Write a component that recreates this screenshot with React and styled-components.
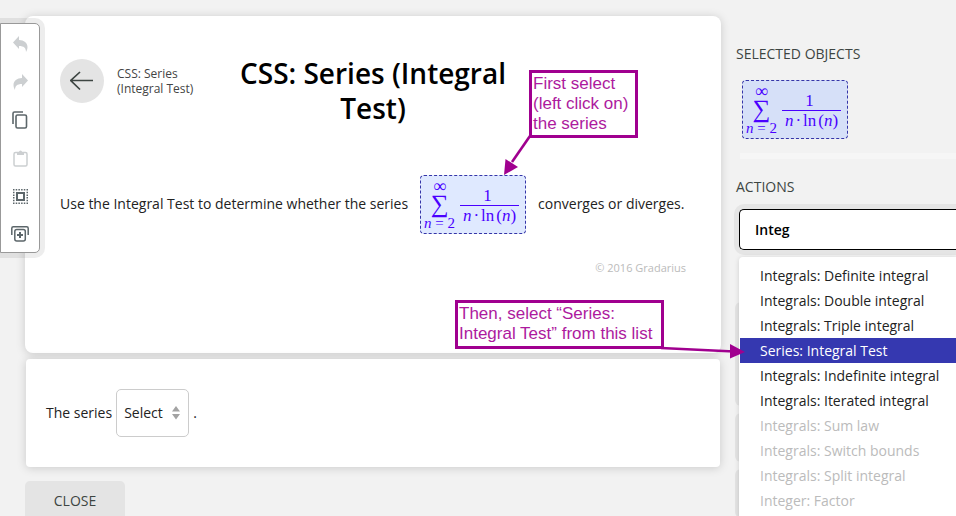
import React, { useState } from "react";
import styled, { createGlobalStyle } from "styled-components";

const Global = createGlobalStyle`
  * { box-sizing: border-box; }
  html, body { margin: 0; background: #f2f2f2; overflow: hidden; }
  body, button, input, select {
    font-family: "Open Sans", "Noto Sans", sans-serif;
    font-size: 14px;
    color: #222;
  }
`;

const Page = styled.div`
  position: relative;
  display: grid;
  grid-template-columns: minmax(0, 1fr) 220px;
  column-gap: 15px;
  min-height: 100vh;
  padding-left: 25px;
`;

const Toolbar = styled.nav`
  position: absolute;
  left: 0;
  top: 23px;
  z-index: 2;
  display: flex;
  flex-direction: column;
  width: 40px;
  background: #fff;
  border: 1px solid #999;
  border-radius: 0 5px 5px 0;
  box-shadow: 0 0 0 5px rgba(0, 0, 0, 0.07);
`;

const ToolButton = styled.button`
  display: grid;
  place-items: center;
  height: 38px;
  padding: 2px 0 0;
  border: 0;
  background: none;
  color: #5c666a;
  &:disabled { color: #cccfd1; }
`;

const Main = styled.main`
  display: flex;
  flex-direction: column;
  align-items: stretch;
  padding-top: 16px;
`;

const Card = styled.section`
  background: #fff;
  box-shadow: 0 1px 10px rgba(0, 0, 0, 0.17);
`;

const ProblemCard = styled(Card)`
  padding: 40px 35px 75px;
  border-radius: 8px;
`;

const Header = styled.header`
  display: grid;
  grid-template-columns: 44px 87px minmax(0, 1fr) 144px;
  align-items: start;
  column-gap: 13px;
`;

const BackButton = styled.button`
  display: grid;
  place-items: center;
  width: 44px;
  height: 44px;
  margin-top: 3px;
  padding: 0;
  border: 0;
  border-radius: 50%;
  background: #e4e4e4;
  color: #3d4542;
`;

const Crumb = styled.div`
  margin-top: 10px;
  font-size: 12px;
  line-height: 15px;
  color: #444;
`;

const Title = styled.h1`
  margin: 0;
  font-size: 28px;
  line-height: 35px;
  font-weight: 600;
  text-align: center;
  color: #000;
`;

const Statement = styled.p`
  display: flex;
  align-items: center;
  gap: 12px;
  margin: 49px 0 24px;
`;

const Phrase = styled.span`
  padding-bottom: 2px;
`;

const Copyright = styled.footer`
  font-size: 11px;
  line-height: 20px;
  text-align: right;
  color: #bbb;
`;

const AnswerCard = styled(Card)`
  display: flex;
  align-items: center;
  gap: 4px;
  margin: 6px 1px 14px;
  padding: 30px 20px;
  border-radius: 4px;
`;

const SelectBox = styled.span`
  display: grid;
  align-items: center;
  width: 73px;
  > * { grid-area: 1 / 1; }
  > svg { justify-self: end; margin-right: 9px; pointer-events: none; }
`;

const Select = styled.select`
  appearance: none;
  width: 100%;
  height: 48px;
  padding: 0 7px 2px;
  border: 1px solid #ccc;
  border-radius: 5px;
  background: #fff;
`;

const CloseButton = styled.button`
  align-self: flex-start;
  width: 100px;
  height: 40px;
  padding: 0 0 2px;
  border: 0;
  border-radius: 5px;
  background: #e4e4e4;
  color: #3d4542;
`;

const Formula = styled.button`
  display: flex;
  align-items: center;
  gap: 5px;
  flex: none;
  width: 106px;
  height: 59px;
  padding: 0 3px;
  border: 1px dashed #3535a8;
  border-radius: 4px;
  background: ${(p) => (p.$muted ? "#d6e0f8" : "#dfe9ff")};
  color: #4a00ff;
  font-family: "Liberation Serif", serif;
`;

const SumColumn = styled.span`
  display: flex;
  flex-direction: column;
  align-items: center;
  width: 31px;
`;

const Limit = styled.span`
  font-size: ${(p) => (p.$top ? "18px" : "15px")};
  line-height: ${(p) => (p.$top ? "14px" : "16px")};
  white-space: nowrap;
`;

const Sigma = styled.span`
  font-size: 25px;
  line-height: 22px;
`;

const Fraction = styled.span`
  display: flex;
  flex-direction: column;
  width: 59px;
  text-align: center;
  font-size: 17px;
  line-height: 20px;
  white-space: nowrap;
`;

const Numerator = styled.span`
  height: 20px;
  padding: 1px 4px 0 0;
`;

const Denominator = styled.span`
  display: flex;
  justify-content: center;
  align-items: center;
  gap: 2px;
  height: 20px;
  padding-top: 2px;
  border-top: 1px solid currentColor;
`;

const Side = styled.aside`
  padding-top: 44px;
`;

const SideHeading = styled.h2`
  margin: 0;
  font-size: 14px;
  line-height: 20px;
  font-weight: 400;
  color: #3d4542;
`;

const SelectedObject = styled.div`
  padding: 16px 6px 14px;
`;

const Divider = styled.hr`
  height: 6px;
  margin: 0 0 18px 4px;
  border: 0;
  background: #f6f6f6;
`;

const Combo = styled.div`
  position: relative;
  margin: 12px 0 52px 3px;
`;

const Search = styled.input`
  display: block;
  width: 100%;
  height: 41px;
  padding: 0 15px;
  border: 1px solid #000;
  border-right: 0;
  border-radius: 5px 0 0 5px;
  background: #fff;
  color: #000;
  font-weight: 600;
  outline: 0;
  box-shadow: 0 0 0 5px rgba(0, 0, 0, 0.05);
`;

const Options = styled.ul`
  position: absolute;
  top: 48px;
  left: 0;
  right: 0;
  margin: 0;
  padding: 6px 0 6px 1px;
  list-style: none;
  background: #fff;
  border-radius: 4px 0 0 0;
  box-shadow: 0 1px 5px rgba(0, 0, 0, 0.15);
`;

const Option = styled.li`
  padding-left: 20px;
  line-height: 25px;
  white-space: nowrap;
  color: ${(p) => (p.$active ? "#fff" : p.$disabled ? "#bbb" : "#222")};
  background: ${(p) => (p.$active ? "#3538b0" : "transparent")};
`;

const ActionTile = styled.div`
  height: ${(p) => (p.$tall ? "104px" : "49px")};
  margin: 0 0 7px -1px;
  border-radius: 6px 0 0 6px;
  background: #e4e4e4;
`;

const Callout = styled.div`
  position: absolute;
  z-index: 3;
  left: ${(p) => p.$x}px;
  top: ${(p) => p.$y}px;
  padding: 1px;
  border: 3px solid #a0008f;
  background: #fff;
  color: #ad1a9e;
  font-family: "Liberation Sans", sans-serif;
  font-size: 17px;
  line-height: 20px;
  white-space: nowrap;
`;

const FirstCallout = styled(Callout)`
  width: 109px;
  height: 68px;
`;

const SecondCallout = styled(Callout)`
  width: 209px;
  height: 49px;
`;

const Arrow = styled.svg`
  position: absolute;
  z-index: 4;
  left: ${(p) => p.$x}px;
  top: ${(p) => p.$y}px;
  fill: #a0008f;
  stroke: #a0008f;
`;

function SeriesFormula({ muted }) {
  return (
    <Formula type="button" $muted={muted}>
      <SumColumn>
        <Limit $top>∞</Limit>
        <Sigma>∑</Sigma>
        <Limit><i>n</i> = 2</Limit>
      </SumColumn>
      <Fraction>
        <Numerator>1</Numerator>
        <Denominator><i>n</i><span>·</span><span>ln</span><span>(<i>n</i>)</span></Denominator>
      </Fraction>
    </Formula>
  );
}

const UndoShape = () => (
  <path fill="currentColor" d="M6 0v4c5 0 8.500 3 8.500 7 0 2-.5 3-1.500 5 0-4-2-6-7-6v3L0 6.500z" />
);

const tools = [
  { label: "Undo", disabled: true, icon: <svg width="15" height="16" viewBox="0 0 15 16"><UndoShape /></svg> },
  { label: "Redo", disabled: true, icon: <svg width="15" height="16" viewBox="0 0 15 16"><g transform="translate(15 0) scale(-1 1)"><UndoShape /></g></svg> },
  { label: "Copy", icon: (
    <svg width="16" height="18" viewBox="0 0 16 18" fill="none" stroke="currentColor" strokeWidth="1.600">
      <path d="M1 13V2.500Q1 1 2.500 1H11" /><rect x="4" y="4" width="10.500" height="13" rx="1.500" />
    </svg>) },
  { label: "Paste", disabled: true, icon: (
    <svg width="15" height="17" viewBox="0 0 15 17" fill="none" stroke="currentColor" strokeWidth="1.500">
      <rect x="1" y="2.500" width="13" height="13.500" rx="1.500" />
      <path d="M4 2h2a1.500 1.500 0 0 1 3 0h2v3H4z" fill="currentColor" stroke="none" />
    </svg>) },
  { label: "Select all", icon: (
    <svg width="15" height="15" viewBox="0 0 15 15" fill="none" stroke="currentColor">
      <path strokeWidth="1.500" strokeDasharray="1.500 1.200" d="M0 .75h15M0 14.250h15M.75 0v15M14.250 0v15" />
      <rect x="4" y="4" width="7" height="7" strokeWidth="2" />
    </svg>) },
  { label: "Duplicate", icon: (
    <svg width="18" height="16" viewBox="0 0 18 16" fill="none" stroke="currentColor" strokeWidth="1.500">
      <path d="M.8 9V2.300Q.8.800 2.300.800H15.700Q17.200.800 17.200 2.300V9" />
      <rect x="3.800" y="3.500" width="10.500" height="11.500" rx="2" />
      <path strokeWidth="2" d="M9 6v6M6 9h6" />
    </svg>) },
];

const options = [
  "Integrals: Definite integral",
  "Integrals: Double integral",
  "Integrals: Triple integral",
  "Series: Integral Test",
  "Integrals: Indefinite integral",
  "Integrals: Iterated integral",
  "Integrals: Sum law",
  "Integrals: Switch bounds",
  "Integrals: Split integral",
  "Integer: Factor",
];

export default function App() {
  const [query, setQuery] = useState("Integ");
  return (
    <Page>
      <Global />
      <Toolbar aria-label="Editing tools">
        {tools.map((t) => (
          <ToolButton key={t.label} type="button" aria-label={t.label} disabled={t.disabled}>{t.icon}</ToolButton>
        ))}
      </Toolbar>

      <Main>
        <ProblemCard>
          <Header>
            <BackButton type="button" aria-label="Back">
              <svg width="24" height="20" viewBox="0 0 24 20" fill="none" stroke="currentColor" strokeWidth="1.700">
                <path d="M10 1 .8 9.500 10 18.500M.8 9.500H23" />
              </svg>
            </BackButton>
            <Crumb>CSS: Series (Integral Test)</Crumb>
            <Title>CSS: Series (Integral Test)</Title>
          </Header>
          <Statement>
            <Phrase>Use the Integral Test to determine whether the series</Phrase>
            <SeriesFormula />
            <Phrase>converges or diverges.</Phrase>
          </Statement>
          <Copyright>© 2016 Gradarius</Copyright>
        </ProblemCard>

        <AnswerCard>
          <Phrase as="label" htmlFor="answer">The series</Phrase>
          <SelectBox>
            <Select id="answer" defaultValue="">
              <option value="">Select</option>
              <option>converges</option>
              <option>diverges</option>
            </Select>
            <svg width="8" height="14" viewBox="0 0 8 14" fill="#a3a3a3"><path d="M4 0l4 5.500H0zM4 13.500l4-5.500H0z" /></svg>
          </SelectBox>
          <Phrase>.</Phrase>
        </AnswerCard>

        <CloseButton type="button">CLOSE</CloseButton>
      </Main>

      <Side>
        <SideHeading>SELECTED OBJECTS</SideHeading>
        <SelectedObject><SeriesFormula muted /></SelectedObject>
        <Divider />
        <SideHeading as="label" htmlFor="action">ACTIONS</SideHeading>
        <Combo>
          <Search id="action" value={query} onChange={(e) => setQuery(e.target.value)} />
          <Options role="listbox" aria-label="Actions">
            {options.map((o, i) => (
              <Option key={o} role="option" aria-selected={i === 3} $active={i === 3} $disabled={i > 5}>{o}</Option>
            ))}
          </Options>
        </Combo>
        <ActionTile $tall />
        <ActionTile />
        <ActionTile />
      </Side>

      <FirstCallout $x={529} $y={70}>First select<br />(left click on)<br />the series</FirstCallout>
      <Arrow $x={500} $y={134} width="34" height="44" viewBox="0 0 34 44">
        <path d="M30 2 12 28" strokeWidth="2.600" fill="none" /><path d="M4 41 5.500 25 18 33z" stroke="none" />
      </Arrow>
      <SecondCallout $x={455} $y={300}>Then, select “Series:<br />Integral Test” from this list</SecondCallout>
      <Arrow $x={660} $y={340} width="88" height="22" viewBox="0 0 88 22">
        <path d="M1 8 74 11.500" strokeWidth="2.600" fill="none" /><path d="M85 12 70 4v14.500z" stroke="none" />
      </Arrow>
    </Page>
  );
}
